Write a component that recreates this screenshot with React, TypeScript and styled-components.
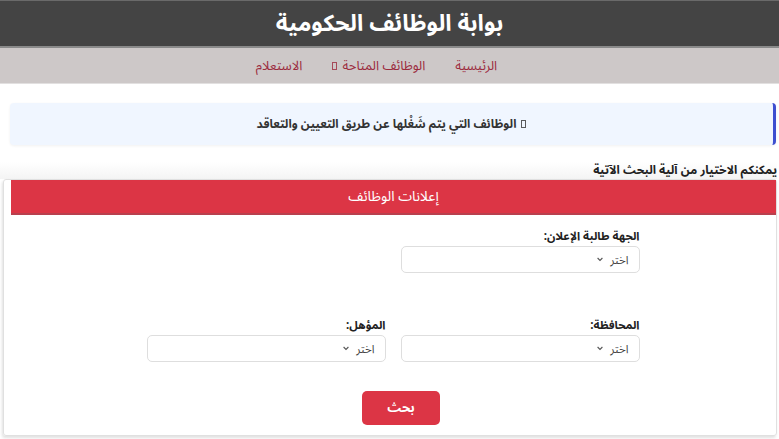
import styled, { createGlobalStyle } from 'styled-components'

const GlobalStyle = createGlobalStyle`
  html, body {
    margin: 0;
    padding: 0;
    background: #fff;
  }
  body {
    font-family: "Noto Sans Arabic", "Noto Naskh Arabic", "DejaVu Sans", sans-serif;
    direction: rtl;
    color: #212529;
  }
  * {
    box-sizing: border-box;
  }
`

const Page = styled.div`
  width: 779px;
  height: 439px;
  overflow: hidden;
`

const TopBar = styled.header`
  height: 48px;
  background: #444444;
  border-top: 1px solid #6a6a6a;
  border-bottom: 2px solid #8a8a8a;
  display: flex;
  align-items: center;
  justify-content: center;
`

const Title = styled.h1`
  margin: 0;
  color: #fff;
  font-size: 23px;
  font-weight: 700;
  letter-spacing: -0.3px;
`

const Nav = styled.nav`
  height: 36px;
  background: #cdc8c8;
  border-bottom: 1px solid #e2e0e0;
  display: flex;
  align-items: center;
  justify-content: center;
  gap: 30px;
  padding-right: 26px;
`

const NavLink = styled.a`
  color: #9c2b3d;
  font-size: 13px;
  text-decoration: none;
  display: flex;
  align-items: center;
  gap: 5px;
`

const Tofu = styled.span`
  display: inline-block;
  width: 5px;
  height: 8px;
  border: 1px solid currentColor;
  opacity: 0.8;
`

const Alert = styled.div`
  margin: 19px 3px 0 10px;
  height: 42px;
  background: #f0f6ff;
  border-radius: 4px;
  border-right: 3px solid #3d4fd0;
  box-shadow: 0 1px 3px rgba(0, 0, 0, 0.06);
  display: flex;
  align-items: center;
  justify-content: center;
  gap: 5px;
  font-size: 12px;
  font-weight: 700;
  color: #333;
`

const Intro = styled.p`
  margin: 17px 2px 0 0;
  height: 17px;
  line-height: 17px;
  font-size: 12px;
  font-weight: 700;
  color: #222;
  background: linear-gradient(#fff, #f4f4f4);
`

const Card = styled.section`
  margin: 0 2px 0 3px;
  height: 257px;
  border: 1px solid #e0e0e0;
  border-radius: 3px;
  box-shadow: -1px 2px 3px rgba(0, 0, 0, 0.12);
`

const CardHeader = styled.div`
  margin-left: 7px;
  height: 35px;
  background: #dc3545;
  border-bottom: 2px solid #b8404e;
  color: #fff;
  font-size: 14px;
  display: flex;
  align-items: center;
  justify-content: center;
`

const Form = styled.div`
  display: flex;
  flex-direction: column;
  gap: 45px;
  padding: 14px 0 0 6px;
`

const FormRow = styled.div`
  display: grid;
  grid-template-columns: 239px 239px;
  column-gap: 15px;
  justify-content: center;
`

const Field = styled.div`
  display: flex;
  flex-direction: column;
  gap: 2px;
`

const Label = styled.label`
  font-size: 11.5px;
  line-height: 15px;
  font-weight: 700;
  color: #222;
`

const Select = styled.div`
  height: 27px;
  border: 1px solid #dedede;
  border-radius: 5px;
  background: #fff;
  display: flex;
  align-items: center;
  gap: 6px;
  padding: 0 10px;
  font-size: 11.5px;
  color: #444;
`

const Chevron = () => (
  <svg width="8" height="8" viewBox="0 0 10 10" fill="none" stroke="#555" strokeWidth="1.4">
    <path d="M2 2.5 L5 5.5 L8 2.5" />
  </svg>
)

const Actions = styled.div`
  display: flex;
  justify-content: center;
  padding: 29px 0 0 22px;
`

const Button = styled.button`
  width: 78px;
  height: 34px;
  border: none;
  border-radius: 5px;
  background: #dc3545;
  color: #fff;
  font-family: inherit;
  font-size: 13px;
  font-weight: 700;
`

const SelectField = ({ label }: { label: string }) => (
  <Field>
    <Label>{label}</Label>
    <Select>
      <span>اختر</span>
      <Chevron />
    </Select>
  </Field>
)

export default function App() {
  return (
    <Page>
      <GlobalStyle />
      <TopBar>
        <Title>بوابة الوظائف الحكومية</Title>
      </TopBar>
      <Nav>
        <NavLink>الرئيسية</NavLink>
        <NavLink>
          الوظائف المتاحة <Tofu />
        </NavLink>
        <NavLink>الاستعلام</NavLink>
      </Nav>
      <Alert>
        <Tofu />
        الوظائف التي يتم شَغْلها عن طريق التعيين والتعاقد
      </Alert>
      <Intro>يمكنكم الاختيار من آلية البحث الآتية</Intro>
      <Card>
        <CardHeader>إعلانات الوظائف</CardHeader>
        <Form>
          <FormRow>
            <SelectField label="الجهة طالبة الإعلان:" />
          </FormRow>
          <FormRow>
            <SelectField label="المحافظة:" />
            <SelectField label="المؤهل:" />
          </FormRow>
        </Form>
        <Actions>
          <Button>بحث</Button>
        </Actions>
      </Card>
    </Page>
  )
}
